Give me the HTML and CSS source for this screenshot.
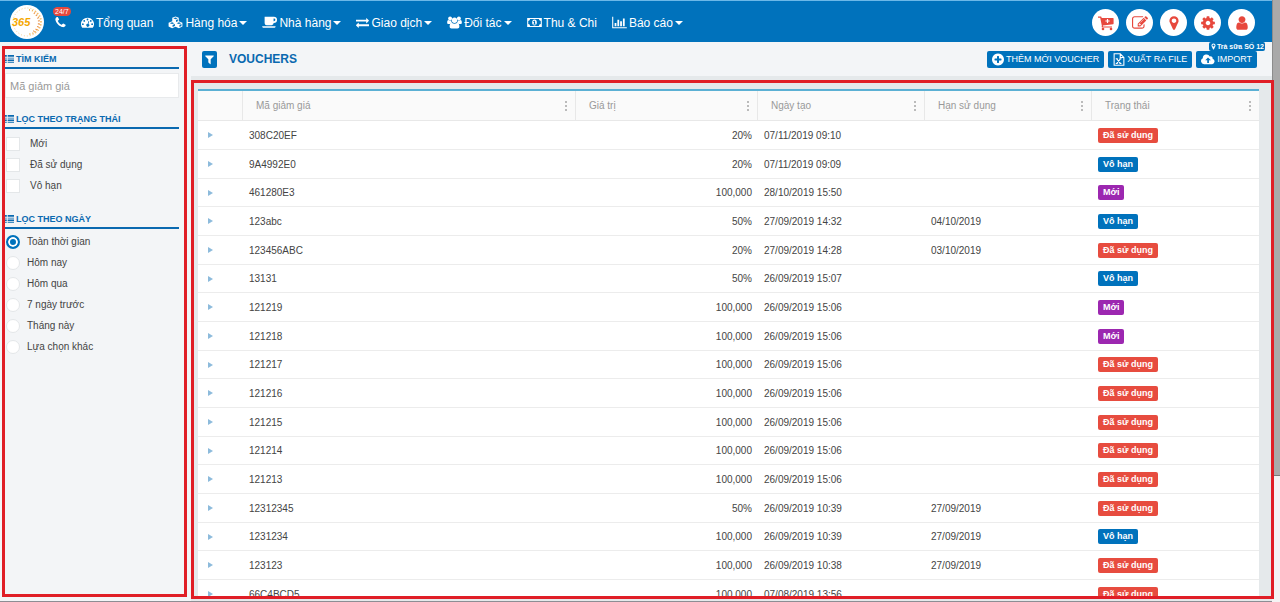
FILE: index.html
```html
<!DOCTYPE html>
<html lang="vi">
<head>
    <meta charset="UTF-8">
    <meta name="viewport" content="width=device-width, initial-scale=1.0">
    <title>Vouchers</title>
    <link rel="stylesheet" href="styles.css">
</head>
<body>
    <!-- Icon set -->
    <svg class="icon-set" aria-hidden="true">
        <symbol id="i-phone" viewBox="0 0 1792 1792"><path d="M1600 1240q0 27-10 70.5t-21 68.5q-21 50-122 106-94 51-186 51-27 0-53-3.5t-57-12.5-47-14.5-55.5-20.5-49.5-18q-98-35-175-83-127-79-264-216t-216-264q-48-77-83-175-3-9-18-49.5t-20.5-55.5-14.5-47-12.5-57-3.5-53q0-92 51-186 56-101 106-122 25-11 68.5-21t70.5-10q14 0 21 3 18 6 53 76 11 19 30 54t35 63.5 31 53.5q3 4 17.5 25t21.5 35.5 7 28.5q0 20-28.5 50t-62 55-62 53-28.5 46q0 9 5 22.5t8.5 20.5 14 24 11.5 19q76 137 174 235t235 174q2 1 19 11.5t24 14 20.5 8.5 22.5 5q18 0 46-28.5t53-62 55-62 50-28.5q14 0 28.5 7t35.5 21.5 25 17.5q25 15 53.5 31t63.5 35 54 30q70 35 76 53 3 7 3 21z"/></symbol>
        <symbol id="i-dashboard" viewBox="0 0 16 16"><path fill-rule="evenodd" d="M8 2a8 8 0 0 0-8 8c0 1.600.5 3 1.300 4.300.2.200.4.200.6.200h12.200c.2 0 .4 0 .6-.2A8 8 0 0 0 8 2zM2.300 8.900a1.100 1.100 0 1 1 0 2.200 1.100 1.100 0 0 1 0-2.200zM4 4.900a1.100 1.100 0 1 1 0 2.200 1.100 1.100 0 0 1 0-2.200zM8 3.200a1.100 1.100 0 1 1 0 2.200 1.100 1.100 0 0 1 0-2.200zM12 4.900a1.100 1.100 0 1 1 0 2.200 1.100 1.100 0 0 1 0-2.200zM13.700 8.900a1.100 1.100 0 1 1 0 2.200 1.100 1.100 0 0 1 0-2.200zM9.200 6.200l.9.200-.9 3.400a1.800 1.800 0 1 1-.9-.2z"/></symbol>
        <symbol id="i-cubes" viewBox="0 0 18 16"><path fill-rule="evenodd" d="M9 .5l4 1.600v4.300l4.500 1.800v4.800L13.200 15 9 13.200 4.800 15 .5 13V8.200L5 6.400V2.100zM9 1.700L6.300 2.800 9 3.900l2.700-1.100zM9.600 5v2.500l2.300-1V4zM4.800 7.600L2 8.800l2.800 1.100 2.800-1.100zM5.400 11v2.600L8.300 12.300V9.800zM13.200 7.600l-2.800 1.200 2.800 1.100L16 8.800zM13.800 11v2.600l2.500-1.200V9.900z"/></symbol>
        <symbol id="i-coffee" viewBox="0 0 18 16"><path fill-rule="evenodd" d="M3 1h11.500a3.500 3.500 0 0 1 0 7.500H14a2.500 2.500 0 0 1-2.500 2.800h-6A2.500 2.500 0 0 1 3 9zM14 3v3.500h.5a1.700 1.700 0 0 0 0-3.500zM0 12.500h16.500c0 1.200-1 2-2 2H2c-1 0-2-.8-2-2z"/></symbol>
        <symbol id="i-exchange" viewBox="0 0 1792 1792"><path d="M1792 1184v192q0 13-9.500 22.500t-22.500 9.500h-1376v192q0 13-9.500 22.500t-22.500 9.500q-12 0-24-10l-319-320q-9-9-9-22 0-14 9-23l320-320q9-9 23-9 13 0 22.500 9.500t9.500 22.500v192h1376q13 0 22.500 9.500t9.500 22.500zm0-544q0 14-9 23l-320 320q-9 9-23 9-13 0-22.500-9.500t-9.500-22.500v-192h-1376q-13 0-22.500-9.500t-9.500-22.500v-192q0-13 9.500-22.500t22.500-9.500h1376v-192q0-14 9-23t23-9q12 0 24 10l319 319q9 9 9 23z"/></symbol>
        <symbol id="i-users" viewBox="0 0 18 16"><circle cx="3.600" cy="3" r="2.400"/><circle cx="14.400" cy="3" r="2.400"/><circle cx="9" cy="5.200" r="3.300"/><path d="M0 9V7.500C0 6 .7 5 1.800 5c.8.700 2 .9 3 .6.100 1.200.5 2.200 1.200 3-1 0-2 .4-2.600 1.200H1.300C.5 9.800 0 9.500 0 9zM18 9V7.500C18 6 17.300 5 16.200 5c-.8.700-2 .9-3 .6-.1 1.200-.5 2.200-1.200 3 1 0 2 .4 2.600 1.200h2.100c.8 0 1.300-.3 1.300-.8zM3 13c0-2.500.8-4.300 3-4.300 1.600 1.300 4.400 1.300 6 0 2.200 0 3 1.800 3 4.300 0 1.500-.9 2.400-2.300 2.400H5.300C3.900 15.400 3 14.500 3 13z"/></symbol>
        <symbol id="i-money" viewBox="0 0 18 16"><path fill-rule="evenodd" d="M0 2.500h18v11H0zM3.600 3.800a2.400 2.400 0 0 1-2.300 2.300v3.800a2.400 2.400 0 0 1 2.300 2.300h10.800a2.400 2.400 0 0 1 2.300-2.300V6.100a2.400 2.400 0 0 1-2.300-2.300zM9 4.400c1.800 0 2.900 1.600 2.900 3.600S10.800 11.600 9 11.600 6.100 10 6.100 8 7.200 4.400 9 4.400zM8.700 5.700L7.200 6.900l.6.700.6-.4v2.200h-1v1h3.200v-1h-.9V5.700z"/></symbol>
        <symbol id="i-chart" viewBox="0 0 18 16"><path d="M0 1h1.300v12.700H18V15H0zM3 8.500h2.200v4.200H3zM6.400 4.500h2.200v8.200H6.400zM9.800 6.500H12v6.200H9.800zM13.200 3h2.200v9.700h-2.200z"/></symbol>
        <symbol id="i-cart" viewBox="0 0 16 16"><path fill-rule="evenodd" d="M0 1.500h2.800c.5 0 .7.400.8.900L3.700 3H15c.4 0 .6.300.6.600v5c0 .3-.2.500-.5.600l-10.300 1.200.2 1H14v1.200H4.200c-.5 0-.7-.4-.6-.8l.3-.9L2.200 2.700H0zM8.900 3.900v1.500H7.400v1.200h1.500v1.500h1.200V6.600h1.500V5.400h-1.500V3.900z"/><circle cx="5" cy="14" r="1.300"/><circle cx="13" cy="14" r="1.300"/></symbol>
        <symbol id="i-edit" viewBox="0 0 1792 1792"><path d="M888 1184l116-116-152-152-116 116v56h96v96h56zm440-720q-16-16-33 1l-350 350q-17 17-1 33t33-1l350-350q17-17 1-33zm80 594v190q0 119-84.500 203.500t-203.500 84.500h-832q-119 0-203.500-84.500t-84.500-203.500v-832q0-119 84.500-203.500t203.500-84.500h832q63 0 117 25 15 7 18 23 3 17-9 29l-49 49q-14 14-32 8-23-6-45-6h-832q-66 0-113 47t-47 113v832q0 66 47 113t113 47h832q66 0 113-47t47-113v-126q0-13 9-22l64-64q15-15 35-7t20 29zm-96-738l288 288-672 672h-288v-288zm444 132l-92 92-288-288 92-92q28-28 68-28t68 28l152 152q28 28 28 68t-28 68z"/></symbol>
        <symbol id="i-marker" viewBox="0 0 1792 1792"><path d="M1152 640q0-106-75-181t-181-75-181 75-75 181 75 181 181 75 181-75 75-181zm256 0q0 109-33 179l-364 774q-16 33-47.500 52t-67.500 19-67.500-19-46.500-52l-365-774q-33-70-33-179 0-212 150-362t362-150 362 150 150 362z"/></symbol>
        <symbol id="i-cog" viewBox="0 0 1792 1792"><path d="M1152 896q0-106-75-181t-181-75-181 75-75 181 75 181 181 75 181-75 75-181zm512-109v222q0 12-8 23t-20 13l-185 28q-19 54-39 91 35 50 107 138 10 12 10 25t-9 23q-27 37-99 108t-94 71q-12 0-26-9l-138-108q-44 23-91 38-16 136-29 186-7 28-36 28h-222q-14 0-24.500-8.500t-11.500-21.500l-28-184q-49-16-90-37l-141 107q-10 9-25 9-14 0-25-11-126-114-165-168-7-10-7-23 0-12 8-23 15-21 51-66.500t54-70.500q-27-50-41-99l-183-27q-13-2-21-12.500t-8-23.500v-222q0-12 8-23t19-13l186-28q14-46 39-92-40-57-107-138-10-12-10-24 0-10 9-23 26-36 98.500-107.500t94.500-71.500q13 0 26 10l138 107q44-23 91-38 16-136 29-186 7-28 36-28h222q14 0 24.500 8.500t11.500 21.500l28 184q49 16 90 37l142-107q9-9 24-9 13 0 25 10 129 119 165 170 7 8 7 22 0 12-8 23-15 21-51 66.500t-54 70.500q26 50 41 98l183 28q13 2 21 12.500t8 23.500z"/></symbol>
        <symbol id="i-user" viewBox="0 0 1792 1792"><path d="M1536 1399q0 109-62.500 187t-150.500 78h-854q-88 0-150.500-78t-62.500-187q0-85 8.500-160.500t31.500-152 58.500-131 94-89 134.500-34.500q131 128 313 128t313-128q76 0 134.500 34.500t94 89 58.500 131 31.500 152 8.500 160.500zm-256-887q0 159-112.500 271.500t-271.500 112.500-271.500-112.500-112.500-271.500 112.500-271.500 271.500-112.500 271.500 112.500 112.500 271.500z"/></symbol>
        <symbol id="i-filter" viewBox="0 0 1792 1792"><path d="M1595 295q17 41-14 70l-493 493v742q0 42-39 59-13 5-25 5-27 0-45-19l-256-256q-19-19-19-45v-486l-493-493q-31-29-14-70 17-39 59-39h1280q42 0 59 39z"/></symbol>
        <symbol id="i-plus" viewBox="128 128 1536 1536"><path d="M1344 960v-128q0-26-19-45t-45-19h-256v-256q0-26-19-45t-45-19h-128q-26 0-45 19t-19 45v256h-256q-26 0-45 19t-19 45v128q0 26 19 45t45 19h256v256q0 26 19 45t45 19h128q26 0 45-19t19-45v-256h256q26 0 45-19t19-45zm320-64q0 209-103 385.500t-279.500 279.500-385.500 103-385.500-103-279.500-279.500-103-385.500 103-385.500 279.500-279.500 385.500-103 385.500 103 279.500 279.500 103 385.500z"/></symbol>
        <symbol id="i-excel" viewBox="0 0 14 16"><path fill="none" stroke="currentColor" stroke-width="1.300" d="M1 1h7.500L13 5.500V15H1zM8.500 1v4.500H13M4 7l5 6M9 7l-5 6M3 7h2.500M7.500 7H10M3 13h2.500M7.500 13H10"/></symbol>
        <symbol id="i-cloud" viewBox="0 0 18 16"><path fill-rule="evenodd" d="M4 14a4 4 0 0 1-1.700-7.600A4.800 4.800 0 0 1 11.300 4a2.600 2.600 0 0 1 3.600 3A3.600 3.600 0 0 1 14.400 14zM9 5.500L5.500 9H8v3.500h2.200V9h2.500z"/></symbol>
        <symbol id="i-list" viewBox="0 0 10 10"><path d="M0 0h2v2H0zM3 0h7v2H3zM0 3h2v1H0zM3 3h7v1H3zM0 5h2v2H0zM3 5h7v2H3zM0 8h2v1H0zM3 8h7v1H3z"/></symbol>
    </svg>

    <div class="app">
        <header class="navbar">
            <a class="logo" href="#" aria-label="365">
                <svg viewBox="0 0 34 34">
                    <circle cx="17" cy="17" r="17" fill="#fff"/>
                    <g fill="none" stroke="#f3b75c" stroke-dasharray="1 2">
                        <circle cx="17" cy="17" r="14" stroke="#f6cf94"/>
                        <path stroke-width="2" d="M19 5a12 12 0 0 1 0 24"/>
                        <path stroke="#e98a3a" stroke-width="2" d="M24 8a11 11 0 0 1-1 19"/>
                    </g>
                    <text class="logo-text" x="2" y="21">365</text>
                </svg>
            </a>
            <a class="hotline" href="#" aria-label="Hotline">
                <svg class="icon"><use href="#i-phone"/></svg>
                <span class="hotline-badge">24/7</span>
            </a>
            <nav class="menu">
                <a href="#"><svg class="icon"><use href="#i-dashboard"/></svg>Tổng quan</a>
                <a href="#"><svg class="icon wide"><use href="#i-cubes"/></svg>Hàng hóa<span class="caret"></span></a>
                <a href="#"><svg class="icon wide"><use href="#i-coffee"/></svg>Nhà hàng<span class="caret"></span></a>
                <a href="#"><svg class="icon"><use href="#i-exchange"/></svg>Giao dịch<span class="caret"></span></a>
                <a href="#"><svg class="icon wide"><use href="#i-users"/></svg>Đối tác<span class="caret"></span></a>
                <a href="#"><svg class="icon wide"><use href="#i-money"/></svg>Thu &amp; Chi</a>
                <a href="#"><svg class="icon wide"><use href="#i-chart"/></svg>Báo cáo<span class="caret"></span></a>
            </nav>
            <div class="quick-links">
                <button type="button" aria-label="Bán hàng"><svg class="icon"><use href="#i-cart"/></svg></button>
                <button type="button" aria-label="Ghi chú"><svg class="icon"><use href="#i-edit"/></svg></button>
                <button type="button" aria-label="Chi nhánh"><svg class="icon"><use href="#i-marker"/></svg></button>
                <button type="button" aria-label="Cài đặt"><svg class="icon"><use href="#i-cog"/></svg></button>
                <button type="button" aria-label="Tài khoản"><svg class="icon"><use href="#i-user"/></svg></button>
            </div>
            <span class="branch"><svg class="icon"><use href="#i-marker"/></svg>Trà sữa SỐ 12</span>
        </header>

        <div class="page">
            <!-- Filters -->
            <aside class="sidebar">
                <h2><svg class="icon"><use href="#i-list"/></svg>TÌM KIẾM</h2>
                <input class="search" type="text" placeholder="Mã giảm giá" aria-label="Mã giảm giá">

                <h2><svg class="icon"><use href="#i-list"/></svg>LỌC THEO TRẠNG THÁI</h2>
                <div class="options checks">
                    <label><input type="checkbox">Mới</label>
                    <label><input type="checkbox">Đã sử dụng</label>
                    <label><input type="checkbox">Vô hạn</label>
                </div>

                <h2><svg class="icon"><use href="#i-list"/></svg>LỌC THEO NGÀY</h2>
                <div class="options radios">
                    <label><input type="radio" name="date" checked>Toàn thời gian</label>
                    <label><input type="radio" name="date">Hôm nay</label>
                    <label><input type="radio" name="date">Hôm qua</label>
                    <label><input type="radio" name="date">7 ngày trước</label>
                    <label><input type="radio" name="date">Tháng này</label>
                    <label><input type="radio" name="date">Lựa chọn khác</label>
                </div>
            </aside>

            <main class="content">
                <div class="toolbar">
                    <button class="filter-btn" type="button" aria-label="Bộ lọc"><svg class="icon"><use href="#i-filter"/></svg></button>
                    <h1>VOUCHERS</h1>
                    <div class="actions">
                        <button type="button"><svg class="icon"><use href="#i-plus"/></svg>THÊM MỚI VOUCHER</button>
                        <button type="button"><svg class="icon"><use href="#i-excel"/></svg>XUẤT RA FILE</button>
                        <button type="button"><svg class="icon wide"><use href="#i-cloud"/></svg>IMPORT</button>
                    </div>
                </div>

                <!-- Voucher list -->
                <div class="list-panel">
                    <table class="vouchers">
                        <colgroup>
                            <col class="col-toggle">
                            <col class="col-code">
                            <col class="col-value">
                            <col class="col-date">
                            <col class="col-date">
                            <col class="col-date">
                        </colgroup>
                        <thead>
                            <tr>
                                <th></th>
                                <th><div>Mã giảm giá<i class="dots"></i></div></th>
                                <th><div>Giá trị<i class="dots"></i></div></th>
                                <th><div>Ngày tạo<i class="dots"></i></div></th>
                                <th><div>Hạn sử dụng<i class="dots"></i></div></th>
                                <th><div>Trạng thái<i class="dots"></i></div></th>
                            </tr>
                        </thead>
                        <tbody>
                            <tr><td><i class="arrow"></i></td><td>308C20EF</td><td class="num">20%</td><td>07/11/2019 09:10</td><td></td><td><span class="tag used">Đã sử dụng</span></td></tr>
                            <tr><td><i class="arrow"></i></td><td>9A4992E0</td><td class="num">20%</td><td>07/11/2019 09:09</td><td></td><td><span class="tag unlimited">Vô hạn</span></td></tr>
                            <tr><td><i class="arrow"></i></td><td>461280E3</td><td class="num">100,000</td><td>28/10/2019 15:50</td><td></td><td><span class="tag new">Mới</span></td></tr>
                            <tr><td><i class="arrow"></i></td><td>123abc</td><td class="num">50%</td><td>27/09/2019 14:32</td><td>04/10/2019</td><td><span class="tag unlimited">Vô hạn</span></td></tr>
                            <tr><td><i class="arrow"></i></td><td>123456ABC</td><td class="num">20%</td><td>27/09/2019 14:28</td><td>03/10/2019</td><td><span class="tag used">Đã sử dụng</span></td></tr>
                            <tr><td><i class="arrow"></i></td><td>13131</td><td class="num">50%</td><td>26/09/2019 15:07</td><td></td><td><span class="tag unlimited">Vô hạn</span></td></tr>
                            <tr><td><i class="arrow"></i></td><td>121219</td><td class="num">100,000</td><td>26/09/2019 15:06</td><td></td><td><span class="tag new">Mới</span></td></tr>
                            <tr><td><i class="arrow"></i></td><td>121218</td><td class="num">100,000</td><td>26/09/2019 15:06</td><td></td><td><span class="tag new">Mới</span></td></tr>
                            <tr><td><i class="arrow"></i></td><td>121217</td><td class="num">100,000</td><td>26/09/2019 15:06</td><td></td><td><span class="tag used">Đã sử dụng</span></td></tr>
                            <tr><td><i class="arrow"></i></td><td>121216</td><td class="num">100,000</td><td>26/09/2019 15:06</td><td></td><td><span class="tag used">Đã sử dụng</span></td></tr>
                            <tr><td><i class="arrow"></i></td><td>121215</td><td class="num">100,000</td><td>26/09/2019 15:06</td><td></td><td><span class="tag used">Đã sử dụng</span></td></tr>
                            <tr><td><i class="arrow"></i></td><td>121214</td><td class="num">100,000</td><td>26/09/2019 15:06</td><td></td><td><span class="tag used">Đã sử dụng</span></td></tr>
                            <tr><td><i class="arrow"></i></td><td>121213</td><td class="num">100,000</td><td>26/09/2019 15:06</td><td></td><td><span class="tag used">Đã sử dụng</span></td></tr>
                            <tr><td><i class="arrow"></i></td><td>12312345</td><td class="num">50%</td><td>26/09/2019 10:39</td><td>27/09/2019</td><td><span class="tag used">Đã sử dụng</span></td></tr>
                            <tr><td><i class="arrow"></i></td><td>1231234</td><td class="num">100,000</td><td>26/09/2019 10:39</td><td>27/09/2019</td><td><span class="tag unlimited">Vô hạn</span></td></tr>
                            <tr><td><i class="arrow"></i></td><td>123123</td><td class="num">100,000</td><td>26/09/2019 10:38</td><td>27/09/2019</td><td><span class="tag used">Đã sử dụng</span></td></tr>
                            <tr><td><i class="arrow"></i></td><td>66C4BCD5</td><td class="num">100,000</td><td>07/08/2019 13:56</td><td></td><td><span class="tag used">Đã sử dụng</span></td></tr>
                        </tbody>
                    </table>
                </div>
            </main>
        </div>
        <div class="bottom-line"></div>
    </div>
    <div class="scrollbar"><div class="thumb"></div></div>
</body>
</html>
```
FILE: styles.css
```css
* {
    box-sizing: border-box;
}

body {
    margin: 0;
    display: flex;
    height: 100vh;
    overflow: hidden;
    background-color: #f3f5f7;
    color: #444;
    font-family: "Liberation Sans", Arial, sans-serif;
    font-size: 10px;
}

button {
    font-family: inherit;
    border: none;
    padding: 0;
    cursor: pointer;
}

a {
    color: inherit;
    text-decoration: none;
}

.icon-set {
    position: absolute;
    width: 0;
    height: 0;
}

.icon {
    width: 13px;
    height: 13px;
    fill: currentColor;
    flex: none;
}

.icon.wide {
    width: 15px;
}

.app {
    flex: 1;
    min-width: 0;
    display: flex;
    flex-direction: column;
}

/* Top bar */
.navbar {
    position: relative;
    display: flex;
    align-items: center;
    height: 42px;
    padding: 0 17px 0 10px;
    background-color: #0072bc;
    border-top: 1px solid #6cb8e8;
    color: #fff;
    font-size: 12px;
}

.logo,
.logo svg {
    display: block;
    width: 34px;
    height: 34px;
}

.logo-text {
    fill: #f5a800;
    font-size: 11px;
    font-weight: bold;
    font-style: italic;
}

.hotline {
    position: relative;
    display: flex;
    margin-left: 10px;
    padding-top: 2px;
}

.hotline-badge {
    position: absolute;
    left: -1px;
    bottom: 13px;
    padding: 0 2px;
    border-radius: 5px;
    background-color: #e7483d;
    font-size: 7px;
    line-height: 9px;
}

.menu {
    display: flex;
    gap: 15px;
    margin-left: 14px;
    padding-top: 2px;
}

.menu a {
    display: flex;
    align-items: center;
    gap: 2px;
    white-space: nowrap;
}

.caret {
    border: 4px solid transparent;
    border-top-color: #fff;
    border-bottom: none;
}

.quick-links {
    display: flex;
    gap: 7px;
    margin-left: auto;
    padding-top: 2px;
}

.quick-links button {
    display: flex;
    align-items: center;
    justify-content: center;
    width: 27px;
    height: 27px;
    border-radius: 50%;
    background-color: #fff;
    color: #e7483d;
}

.quick-links .icon {
    width: 16px;
    height: 16px;
}

/* Current branch, hangs below the bar */
.branch {
    position: absolute;
    top: 41px;
    right: 7px;
    display: flex;
    align-items: center;
    padding: 0 1px;
    border-radius: 2px;
    background-color: #0072bc;
    font-size: 7px;
    font-weight: bold;
    line-height: 9px;
}

.branch .icon {
    width: 7px;
    height: 7px;
}

.page {
    flex: 1;
    min-height: 0;
    display: flex;
}

/* Filters */
.sidebar {
    flex: none;
    width: 185px;
    margin: 4px 4px 4px 2px;
    padding: 2px 5px 0 0;
    border: 3px solid #e01e26;
}

.sidebar h2 {
    display: flex;
    align-items: center;
    gap: 2px;
    margin: 13px 0 2px;
    border-bottom: 2px solid #0a69b0;
    color: #0a69b0;
    font-size: 9px;
    line-height: 16px;
}

.sidebar h2:first-child {
    margin: 0 0 4px;
}

.sidebar h2 .icon {
    width: 9px;
    height: 9px;
}

.search {
    display: block;
    width: 100%;
    height: 25px;
    padding: 0 4px;
    border: 1px solid #e8eaec;
    background-color: #fff;
    font-family: inherit;
    font-size: 11px;
}

.search::placeholder {
    color: #999;
}

.options label {
    display: flex;
    align-items: center;
    height: 21px;
    padding-left: 1px;
}

.options input {
    appearance: none;
    margin: 0;
    width: 14px;
    height: 14px;
    border: 1px solid #e4e7e9;
    background-color: #fff;
}

.checks {
    padding: 2px 0;
}

.checks label {
    gap: 10px;
}

.radios label {
    gap: 7px;
}

.radios input {
    border-radius: 50%;
}

.radios input:checked {
    border: 2px solid #0072bc;
    background-color: #0072bc;
    box-shadow: inset 0 0 0 2px #fff;
}

/* Content */
.content {
    flex: 1;
    min-width: 0;
    display: flex;
    flex-direction: column;
    background-color: #e5e9eb;
}

.toolbar {
    display: flex;
    align-items: center;
    height: 34px;
    margin-bottom: 4px;
    padding: 0 15px 0 11px;
    background-color: #f3f5f7;
}

.toolbar button {
    display: flex;
    align-items: center;
    justify-content: center;
    height: 17px;
    border-radius: 2px;
    background-color: #0072bc;
    color: #fff;
}

.toolbar .filter-btn {
    width: 15px;
}

.filter-btn .icon {
    width: 11px;
    height: 11px;
}

.toolbar h1 {
    margin: 0 0 0 12px;
    color: #0a69b0;
    font-size: 12px;
}

.actions {
    display: flex;
    gap: 4px;
    margin-left: auto;
}

.toolbar .actions button {
    gap: 2px;
    padding: 0 5px;
    font-size: 9px;
    white-space: nowrap;
}

.actions .icon {
    height: 13px;
    width: 12px;
}

.actions .icon.wide {
    width: 14px;
}

.list-panel {
    flex: 1;
    min-height: 0;
    position: relative;
    overflow: hidden;
    margin: 0 -2px 2px 0;
    padding: 6px 12px 0 4px;
    border: 3px solid #e01e26;
}

.vouchers {
    width: 100%;
    table-layout: fixed;
    border-collapse: separate;
    border-spacing: 0;
    border-top: 2px solid #5bb0d4;
    background-color: #fff;
}

.col-toggle { width: 45px; }
.col-code { width: 333px; }
.col-value { width: 182px; }
.col-date { width: auto; }

.vouchers th {
    height: 30px;
    padding: 0 8px 0 13px;
    background-color: #fafafa;
    border-right: 1px solid #e8e8e8;
    border-bottom: 1px solid #e8e8e8;
    color: #999;
    font-weight: normal;
    text-align: left;
}

.vouchers th:last-child {
    border-right: none;
}

.vouchers th div {
    display: flex;
    align-items: center;
    justify-content: space-between;
}

.dots {
    width: 2px;
    height: 10px;
    background: repeating-linear-gradient(#bbb 0 2px, transparent 2px 4px);
}

.vouchers td {
    height: 29px;
    padding: 0 6px;
    border-bottom: 1px solid #ececec;
    white-space: nowrap;
}

.vouchers tbody tr:nth-child(3n) td {
    height: 28px;
}

.vouchers td:first-child {
    padding-left: 10px;
}

.vouchers .num {
    text-align: right;
}

.arrow {
    display: block;
    width: 0;
    border: 3px solid transparent;
    border-left: 5px solid #8dbbdc;
    border-right: none;
}

.tag {
    display: inline-block;
    padding: 0 5px;
    border-radius: 2px;
    color: #fff;
    font-size: 9px;
    font-weight: bold;
    line-height: 15px;
}

.used { background-color: #e74c3f; }
.unlimited { background-color: #0072bc; }
.new { background-color: #9c27b0; }

.bottom-line {
    height: 1px;
    background-color: #8d8d93;
}

.scrollbar {
    width: 8px;
    background-color: #f4f4f4;
}

.thumb {
    height: 79%;
    border-left: 1px solid #8c8c8c;
    border-bottom: 1px solid #777;
    background-color: #a9a9a9;
}
```
